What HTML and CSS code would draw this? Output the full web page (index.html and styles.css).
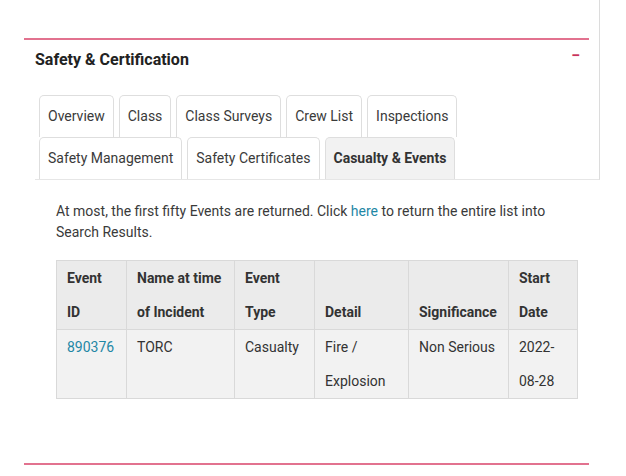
FILE: index.html
```html
<!DOCTYPE html>
<html lang="en">
<head>
  <meta charset="UTF-8">
  <title>Safety &amp; Certification</title>
  <link rel="stylesheet" href="styles.css">
</head>
<body>

  <div class="frame">
    <div class="rule rule-top"></div>
    <div class="section-head">
      <h3>Safety &amp; Certification</h3>
      <span class="toggle">&minus;</span>
    </div>
    <ul class="tabs">
      <li>Overview</li>
      <li>Class</li>
      <li>Class Surveys</li>
      <li>Crew List</li>
      <li>Inspections</li>
      <li>Safety Management</li>
      <li>Safety Certificates</li>
      <li class="active">Casualty &amp; Events</li>
    </ul>
  </div>

  <div class="tab-body">
    <p class="note">At most, the first fifty Events are returned. Click <a href="#">here</a> to return the entire list into Search Results.</p>

    <table class="events">
      <colgroup>
        <col class="c-id">
        <col class="c-name">
        <col class="c-type">
        <col class="c-detail">
        <col class="c-sig">
        <col class="c-date">
      </colgroup>
      <thead>
        <tr>
          <th>Event ID</th>
          <th>Name at time of Incident</th>
          <th>Event Type</th>
          <th>Detail</th>
          <th>Significance</th>
          <th>Start Date</th>
        </tr>
      </thead>
      <tbody>
        <tr>
          <td><a href="#">890376</a></td>
          <td>TORC</td>
          <td>Casualty</td>
          <td>Fire / Explosion</td>
          <td>Non Serious</td>
          <td>2022-08-28</td>
        </tr>
      </tbody>
    </table>
  </div>

  <div class="rule rule-bottom"></div>

</body>
</html>
```

FILE: styles.css
```css
* {
  margin: 0; padding: 0; box-sizing: border-box;
}

body {
  font-family: Roboto, 'Liberation Sans', sans-serif;
  font-size: 14px;
  color: #333;
  background: #fff;
}

a {
  color: #1f87a5;
  text-decoration: none;
}

.frame {
  margin-left: 35px;
  width: 565px;
  padding-top: 38px;
  border-right: 1px solid #dcdcdc;
  border-bottom: 1px solid #e6e6e6;
}

.rule {
  height: 2px;
  background: #e2728f;
}

.rule-top {
  margin-left: -11px;
  width: 565px;
}

.rule-bottom {
  margin: 64px 0 0 24px;
  width: 565px;
}

.section-head {
  display: flex;
  justify-content: space-between;
  align-items: flex-start;
  width: 545px;
  margin-top: 9px;
}

.section-head h3 {
  font-size: 16px;
  font-weight: 700;
  line-height: 22px;
  color: #222;
}

.toggle {
  color: #c8325c;
  font-weight: 700;
  font-size: 16px;
  line-height: 13px;
}

.tabs {
  list-style: none;
  display: flex;
  flex-wrap: wrap;
  column-gap: 5px;
  margin: 24px 0 0 4px;
}

.tabs li {
  padding: 10px 8px;
  line-height: 21px;
  border: 1px solid #dedede;
  border-bottom: none;
  border-radius: 5px 5px 0 0;
  color: #3a3a3a;
}

.tabs li.active {
  background: #f2f2f2;
  font-weight: 700;
  color: #333;
}

.tab-body {
  padding: 21px 0 0 56px;
}

.note {
  line-height: 21px;
  width: 521px;
  color: #3a3a3a;
}

.events {
  margin-top: 17px;
  border-collapse: collapse;
  table-layout: fixed;
  width: 521px;
}

.c-id { width: 70px; }
.c-name { width: 108px; }
.c-type { width: 80px; }
.c-detail { width: 94px; }
.c-sig { width: 100px; }
.c-date { width: 69px; }

.events th,
.events td {
  border: 1px solid #d9d9d9;
  padding: 0 10px;
  line-height: 34px;
  text-align: left;
}

.events th {
  background: #ebebeb;
  vertical-align: bottom;
  font-weight: 700;
}

.events td {
  background: #f2f2f2;
  vertical-align: top;
}
```
